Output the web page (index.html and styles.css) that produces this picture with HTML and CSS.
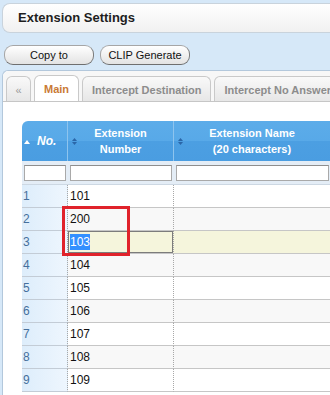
FILE: index.html
```html
<!DOCTYPE html>
<html>
<head>
<meta charset="utf-8">
<link rel="stylesheet" href="styles.css">
</head>
<body>
<div class="page">
  <div class="titlebar">Extension Settings</div>
  <div class="toolbar">
    <button class="btn">Copy to</button>
    <button class="btn">CLIP Generate</button>
  </div>
  <div class="panel">
    <div class="tabs">
      <div class="tab tab-nav">«</div>
      <div class="tab active">Main</div>
      <div class="tab">Intercept Destination</div>
      <div class="tab">Intercept No Answer</div>
    </div>
    <div class="content">
      <table class="grid">
        <colgroup>
          <col class="c-no">
          <col class="c-num">
          <col class="c-name">
        </colgroup>
        <thead>
          <tr class="head">
            <th class="h-no"><svg class="asc" width="6" height="4" viewBox="0 0 6 4"><polygon points="0,4 6,4 3,0" fill="#fff"/></svg><span>No.</span></th>
            <th><svg class="sort" width="5" height="7" viewBox="0 0 5 7"><polygon points="0,3 5,3 2.5,0" fill="#2a66a8"/><polygon points="0,4 5,4 2.5,7" fill="#2a66a8"/></svg>Extension<br>Number</th>
            <th><svg class="sort" width="5" height="7" viewBox="0 0 5 7"><polygon points="0,3 5,3 2.5,0" fill="#2a66a8"/><polygon points="0,4 5,4 2.5,7" fill="#2a66a8"/></svg>Extension Name<br>(20 characters)</th>
          </tr>
          <tr class="filter">
            <td><div class="finput"></div></td>
            <td><div class="finput"></div></td>
            <td><div class="finput"></div></td>
          </tr>
        </thead>
        <tbody>
          <tr><td class="no">1</td><td class="num">101</td><td class="name"></td></tr>
          <tr class="alt"><td class="no">2</td><td class="num">200</td><td class="name"></td></tr>
          <tr class="sel"><td class="no">3</td><td class="num edit"><div class="editbox"><span class="hl">103</span></div></td><td class="name"></td></tr>
          <tr class="alt"><td class="no">4</td><td class="num">104</td><td class="name"></td></tr>
          <tr><td class="no">5</td><td class="num">105</td><td class="name"></td></tr>
          <tr class="alt"><td class="no">6</td><td class="num">106</td><td class="name"></td></tr>
          <tr><td class="no">7</td><td class="num">107</td><td class="name"></td></tr>
          <tr class="alt"><td class="no">8</td><td class="num">108</td><td class="name"></td></tr>
          <tr><td class="no">9</td><td class="num">109</td><td class="name"></td></tr>
        </tbody>
      </table>
    </div>
  </div>
</div>
<div class="mark"></div>
</body>
</html>
```
FILE: styles.css
```css
html, body {
  margin: 0;
  padding: 0;
}
body {
  background: #d6e8f8;
  font-family: "Liberation Sans", Arial, sans-serif;
  font-size: 11px;
  overflow: hidden;
  width: 330px;
  height: 395px;
  position: relative;
}
.page {
  padding: 3px 0 0 2px;
  width: 340px;
}
.titlebar {
  height: 28px;
  line-height: 28px;
  border: 1px solid #c9d3dc;
  border-right: none;
  border-radius: 8px 0 0 8px;
  background: linear-gradient(#ffffff, #f1f1f1);
  padding-left: 15px;
  font-size: 13px;
  font-weight: bold;
  color: #1e1e1e;
}
.toolbar {
  display: flex;
  gap: 6px;
  margin-top: 12px;
  padding-left: 2px;
}
.btn {
  width: 90px;
  height: 20px;
  padding: 0;
  border: 1px solid #a6a6a6;
  border-bottom-color: #6f6f6f;
  border-right-color: #7d7d7d;
  border-radius: 9px;
  background: linear-gradient(#ffffff, #e3e3e3);
  font-family: "Liberation Sans", Arial, sans-serif;
  font-size: 11px;
  color: #111;
}
.panel {
  margin-top: 5px;
  border: 1px solid #b3c8dc;
  border-right: none;
  border-bottom: none;
  border-top-left-radius: 6px;
  background: #fff;
  height: 330px;
}
.tabs {
  display: flex;
  gap: 3px;
  padding: 4px 0 0 3px;
  background: #f7f7f7;
  border-bottom: 1px solid #c6c6c6;
  border-top-left-radius: 6px;
  height: 26px;
  box-sizing: content-box;
  overflow: hidden;
}
.tab {
  height: 25px;
  line-height: 26px;
  border: 1px solid #c9c9c9;
  border-bottom: none;
  border-radius: 6px 6px 0 0;
  background: linear-gradient(#f9f9f9, #e6e6e6);
  padding: 0 9px;
  font-weight: bold;
  font-size: 11px;
  color: #8c8c8c;
  white-space: nowrap;
  margin-top: 1px;
  flex-shrink: 0;
}
.tab-nav {
  width: 23px;
  padding: 0;
  text-align: center;
  color: #9a9a9a;
  font-weight: normal;
}
.tab.active {
  background: #fff;
  color: #c97a35;
  height: 27px;
  margin-top: 0;
  margin-bottom: -1px;
}
.content {
  padding: 19px 0 0 19px;
}
.grid {
  border-collapse: separate;
  border-spacing: 0;
  table-layout: fixed;
  width: 309px;
}
.c-no { width: 46px; }
.c-num { width: 106px; }
.c-name { width: 157px; }
.head th {
  height: 40px;
  padding: 0;
  background: linear-gradient(#5cace9 0, #58a9e8 50%, #4c9fe2 50%, #4a9de1 100%);
  color: #fff;
  font-size: 11px;
  font-weight: bold;
  line-height: 16px;
  text-align: center;
  border-right: 1px solid #8ec4ee;
  position: relative;
  box-sizing: border-box;
}
.head th.h-no {
  border-top-left-radius: 6px;
  text-align: left;
  padding-left: 2px;
}
.h-no span {
  font-style: italic;
  font-size: 12px;
  margin-left: 7px;
}
.asc {
  vertical-align: 1px;
}
.sort {
  position: absolute;
  left: 4px;
  top: 17px;
}
.filter td {
  height: 24px;
  padding: 0 2px;
  background: #e4edf6;
  border-bottom: 1px solid #cdd8e3;
  box-sizing: border-box;
}
.finput {
  height: 16px;
  box-sizing: border-box;
  border: 1px solid #a9a9a9;
  border-top-color: #8e8e8e;
  background: #fff;
}
tbody td {
  height: 23px;
  box-sizing: border-box;
  padding: 0;
  border-bottom: 1px solid #c6c6c6;
  color: #111;
  font-size: 12px;
  vertical-align: middle;
}
tbody tr.alt td { background-color: #f8f8f8; }
tbody tr.sel td { background-color: #f5f5dc; }
tbody td.no {
  background: linear-gradient(to right, #ddedfb, #eef6fe) !important;
  color: #46709c;
  padding-left: 1px;
  border-right: 1px dotted #a8a8a8;
  border-bottom-color: #c3ccd6;
}
tbody td.num {
  padding-left: 2px;
  border-right: 1px dotted #a8a8a8;
}
tbody td.edit {
  padding: 0;
}
.editbox {
  height: 22px;
  box-sizing: border-box;
  border: 1px solid #7c7c7c;
  padding-left: 1px;
  line-height: 20px;
  background: #f5f5dc;
}
.hl {
  background: #3390ff;
  color: #fff;
  padding: 1px 0;
}
.mark {
  position: absolute;
  left: 62px;
  top: 206px;
  width: 68px;
  height: 50px;
  box-sizing: border-box;
  border: 3px solid #e0222b;
}
```
